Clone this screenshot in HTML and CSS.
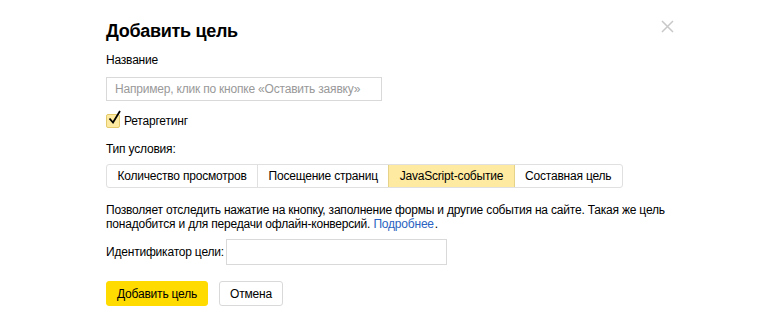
FILE: index.html
```html
<!DOCTYPE html>
<html lang="ru">
<head>
<meta charset="utf-8">
<link rel="stylesheet" href="styles.css">
</head>
<body>
<div class="dialog">
  <button class="close" aria-label="Закрыть">
    <svg width="13" height="13" viewBox="0 0 13 13"><path d="M1 1L12 12M12 1L1 12" stroke="#c8c8c8" stroke-width="1.5" fill="none"/></svg>
  </button>
  <h1 class="title">Добавить цель</h1>
  <div class="label">Название</div>
  <input class="input name-input" placeholder="Например, клик по кнопке «Оставить заявку»">
  <label class="check">
    <span class="box">
      <svg width="17" height="17" viewBox="0 0 17 17"><path d="M3.5 8.5L7 12.5L14 1" stroke="#000" stroke-width="1.8" fill="none"/></svg>
    </span>
    Ретаргетинг
  </label>
  <div class="label cond">Тип условия:</div>
  <div class="tabs">
    <span class="tab">Количество просмотров</span>
    <span class="tab">Посещение страниц</span>
    <span class="tab active">JavaScript-событие</span>
    <span class="tab">Составная цель</span>
  </div>
  <p class="desc">Позволяет отследить нажатие на кнопку, заполнение формы и другие события на сайте. Такая же цель понадобится и для передачи офлайн-конверсий. <a href="#">Подробнее</a><span class="dot">.</span></p>
  <div class="id-row">
    <span>Идентификатор цели:</span>
    <input class="input id-input">
  </div>
  <div class="buttons">
    <button class="btn primary">Добавить цель</button>
    <button class="btn">Отмена</button>
  </div>
</div>
</body>
</html>
```

FILE: styles.css
```css
html, body {
  margin: 0;
  padding: 0;
  background: #fff;
}
body {
  font-family: "Liberation Sans", Arial, sans-serif;
  font-size: 12px;
  letter-spacing: -0.2px;
  color: #000;
}
.dialog {
  position: relative;
  width: 580px;
  padding: 16px 0 0 106px;
}
.close {
  position: absolute;
  left: 661px;
  top: 20px;
  border: 0;
  background: none;
  padding: 0;
  width: 13px;
  height: 13px;
}
.close svg { display: block; }
.title {
  margin: 0;
  font-size: 18px;
  letter-spacing: -0.3px;
  font-weight: bold;
  line-height: 30px;
}
.label {
  margin-top: 6px;
  line-height: 16px;
}
.input {
  display: block;
  box-sizing: border-box;
  height: 24px;
  border: 1px solid #d9d9d9;
  padding: 0 8px;
  font-family: inherit;
  font-size: 12px;
  letter-spacing: -0.2px;
  outline: none;
}
.input::placeholder { color: #999; }
.name-input {
  width: 276px;
  margin-top: 9px;
}
.check {
  display: flex;
  align-items: center;
  gap: 4px;
  margin-top: 12px;
  height: 16px;
}
.box {
  position: relative;
  width: 14px;
  height: 14px;
  background: #fde9a0;
  border: 1px solid #e3c96a;
  border-radius: 2px;
  box-sizing: border-box;
}
.box svg {
  position: absolute;
  left: -1px;
  top: -5px;
}
.cond { margin-top: 12px; }
.tabs {
  display: inline-flex;
  margin-top: 7px;
  border: 1px solid #e0e0e0;
  border-radius: 3px;
  height: 24px;
  box-sizing: border-box;
}
.tab {
  display: flex;
  align-items: center;
  padding: 0 10.4px;
  border-left: 1px solid #e0e0e0;
  white-space: nowrap;
}
.tab:first-child { border-left: 0; }
.tab.active {
  background: #feeba1;
  border-left-color: #e6d38a;
  border-right: 1px solid #e6d38a;
}
.tab.active + .tab { border-left: 0; }
.desc {
  margin: 15px 0 0;
  line-height: 14px;
  width: 575px;
}
.desc a {
  color: #2a63c1;
  text-decoration: none;
  padding-right: 1px;
}
.dot { letter-spacing: 0; }
.id-row {
  display: flex;
  align-items: center;
  gap: 2px;
  margin-top: 8px;
}
.id-input {
  width: 221px;
  height: 26px;
}
.buttons {
  display: flex;
  gap: 11px;
  margin-top: 16px;
}
.btn {
  height: 25px;
  box-sizing: border-box;
  padding: 0 10px;
  font-family: inherit;
  font-size: 12px;
  letter-spacing: -0.2px;
  border: 1px solid #d9d9d9;
  border-radius: 3px;
  background: #fff;
  color: #000;
}
.btn.primary {
  background: #ffdb00;
  border-color: #ffdb00;
}
```
